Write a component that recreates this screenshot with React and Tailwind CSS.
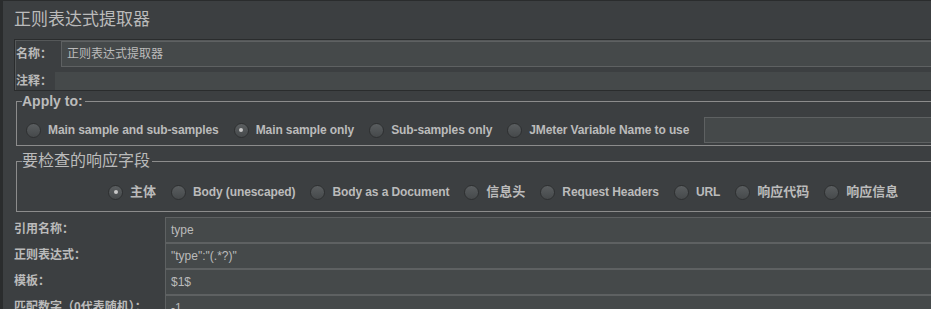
import React from "react";

const font = "font-['Liberation_Sans','Noto_Sans_CJK_SC',sans-serif]";

function Radio({ label, checked, cjk }) {
  return (
    <div className="flex items-center gap-[7px] shrink-0">
      <span className="w-[15px] h-[15px] rounded-full border border-[#2e3031] bg-gradient-to-b from-[#5a5e60] to-[#46494b] flex items-center justify-center">
        {checked && <span className="w-[4px] h-[4px] rounded-full bg-[#c8c8c8]" />}
      </span>
      <span className={`${cjk ? "text-[13px]" : "text-[12px] tracking-[-0.1px]"} font-bold text-[#bbbbbb] whitespace-nowrap`}>
        {label}
      </span>
    </div>
  );
}

function Field({ value }) {
  return (
    <div className="flex-1 h-[26px] border border-[#5e6162] bg-[#45494a] px-[5px] flex items-center text-[12px] text-[#bbbbbb] whitespace-nowrap">
      {value}
    </div>
  );
}

const applyOptions = [
  { label: "Main sample and sub-samples" },
  { label: "Main sample only", checked: true },
  { label: "Sub-samples only" },
  { label: "JMeter Variable Name to use" },
];

const fieldOptions = [
  { label: "主体", checked: true, cjk: true },
  { label: "Body (unescaped)" },
  { label: "Body as a Document" },
  { label: "信息头", cjk: true },
  { label: "Request Headers" },
  { label: "URL" },
  { label: "响应代码", cjk: true },
  { label: "响应信息", cjk: true },
];

const rows = [
  { label: "引用名称：", value: "type" },
  { label: "正则表达式：", value: "\"type\":\"(.*?)\"" },
  { label: "模板：", value: "$1$" },
  { label: "匹配数字（0代表随机）：", value: "-1" },
];

export default function App() {
  return (
    <div className={`w-[931px] h-[309px] overflow-hidden bg-[#3c3f41] border-l-[3px] border-t border-[#2a2c2d] text-[#bbbbbb] ${font}`}>
      <div className="w-[990px] pl-[11px]">
        {/* Title */}
        <div className="h-[38px] flex items-center text-[17px] text-[#bbbbbb]">
          正则表达式提取器
        </div>

        {/* Name / comment */}
        <div className="border-t border-l border-b border-[#2a2c2d] shadow-[inset_1px_1px_0_#555859]">
          <div className="flex items-center h-[27px] pt-[1px]">
            <span className="w-[46px] pl-[1px] text-[12px] font-bold">名称：</span>
            <Field value="正则表达式提取器" />
          </div>
          <div className="flex items-center mt-[5px] h-[18px]">
            <span className="w-[40px] pl-[1px] text-[12px] font-bold">注释：</span>
            <div className="flex-1 h-full bg-[#45494a]" />
          </div>
        </div>

        {/* Apply to */}
        <fieldset className="ml-[2px] mt-[2px] border border-[#8c8c8c] px-[5px] pt-[8px] pb-[2px]">
          <legend className="text-[14px] leading-[16px] font-bold text-[#bbbbbb] pr-[2px]">Apply to:</legend>
          <div className="flex items-center h-[26px] pl-[4px] gap-[15px]">
            {applyOptions.map((o) => (
              <Radio key={o.label} {...o} />
            ))}
            <div className="flex-1 h-[26px] border border-[#5e6162] bg-[#45494a]" />
          </div>
        </fieldset>

        {/* Response field */}
        <fieldset className="ml-[2px] mt-[5px] border border-[#8c8c8c] px-[5px] pt-[8px] pb-[6px]">
          <legend className="text-[16px] leading-[20px] text-[#bbbbbb] pr-[2px]">要检查的响应字段</legend>
          <div className="flex items-center h-[26px] pl-[86px] gap-[15px]">
            {fieldOptions.map((o) => (
              <Radio key={o.label} {...o} />
            ))}
          </div>
        </fieldset>

        {/* Rows */}
        <div className="mt-[5px]">
          {rows.map((r) => (
            <div key={r.label} className="flex items-center h-[26px]">
              <span className="w-[151px] text-[12px] font-bold whitespace-nowrap -mt-[3px]">{r.label}</span>
              <Field value={r.value} />
            </div>
          ))}
        </div>
      </div>
    </div>
  );
}
